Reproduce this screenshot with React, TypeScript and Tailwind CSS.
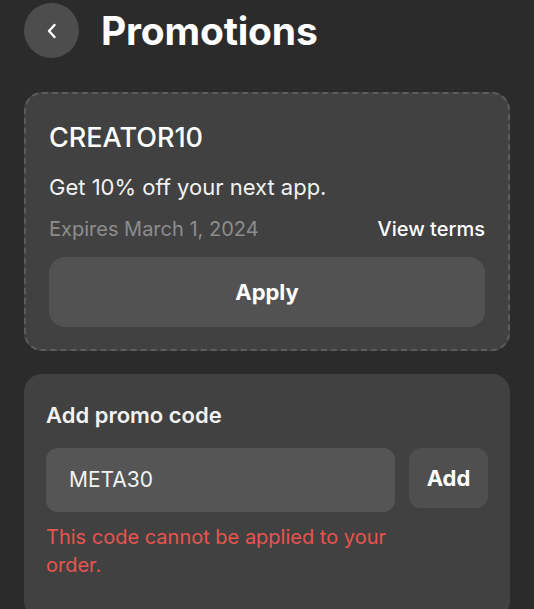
import type { FC } from "react";

const BackButton: FC = () => (
  <button className="flex h-[55px] w-[55px] shrink-0 items-center justify-center rounded-full bg-[#4d4d4d]">
    <svg width="14" height="18" viewBox="0 0 14 18" fill="none">
      <path d="M9.5 3L4 9l5.5 6" stroke="#ffffff" strokeWidth="2.4" strokeLinecap="round" strokeLinejoin="round" />
    </svg>
  </button>
);

const App: FC = () => {
  return (
    <div
      className="h-[609px] w-[534px] overflow-hidden bg-[#2b2b2b] px-6 pt-[3px] text-white"
      style={{ fontFamily: "Inter, 'Noto Sans', sans-serif" }}
    >
      <div className="flex items-center gap-[22px]">
        <BackButton />
        <h1 className="text-[39px] font-bold leading-none tracking-[-0.2px]">Promotions</h1>
      </div>

      <div className="mt-[34px] rounded-[18px] border-2 border-dashed border-[#5c5c5c] bg-[#414141] px-[23px] pt-[28px] pb-[22px]">
        <div className="text-[27px] font-medium leading-[32px]">CREATOR10</div>
        <p className="mt-[19px] text-[22px] leading-[28px] text-[#f2f2f2]">Get 10% off your next app.</p>
        <div className="mt-[15px] flex items-center justify-between text-[20px] leading-[26px]">
          <span className="text-[#8d8d8d]">Expires March 1, 2024</span>
          <span className="font-medium text-white">View terms</span>
        </div>
        <button className="mt-[15px] flex h-[70px] w-full items-center justify-center rounded-[16px] bg-[#525252] text-[22px] font-bold">
          Apply
        </button>
      </div>

      <div className="mt-[23px] rounded-[18px] bg-[#414141] px-[22px] pt-[27px] pb-[40px]">
        <div className="text-[22px] font-semibold leading-[28px] text-[#f2f2f2]">Add promo code</div>
        <div className="mt-[19px] flex items-start gap-[14px]">
          <div className="flex h-[64px] flex-1 items-center rounded-[12px] bg-[#555555] px-[23px] text-[21px] text-[#f2f2f2]">
            META30
          </div>
          <button className="flex h-[60px] w-[79px] items-center justify-center rounded-[12px] bg-[#4f4f4f] text-[22px] font-bold">
            Add
          </button>
        </div>
        <p className="mt-[11px] w-[360px] text-[20px] leading-[28px] text-[#e8544f]">
          This code cannot be applied to your order.
        </p>
      </div>
    </div>
  );
};

export default App;
